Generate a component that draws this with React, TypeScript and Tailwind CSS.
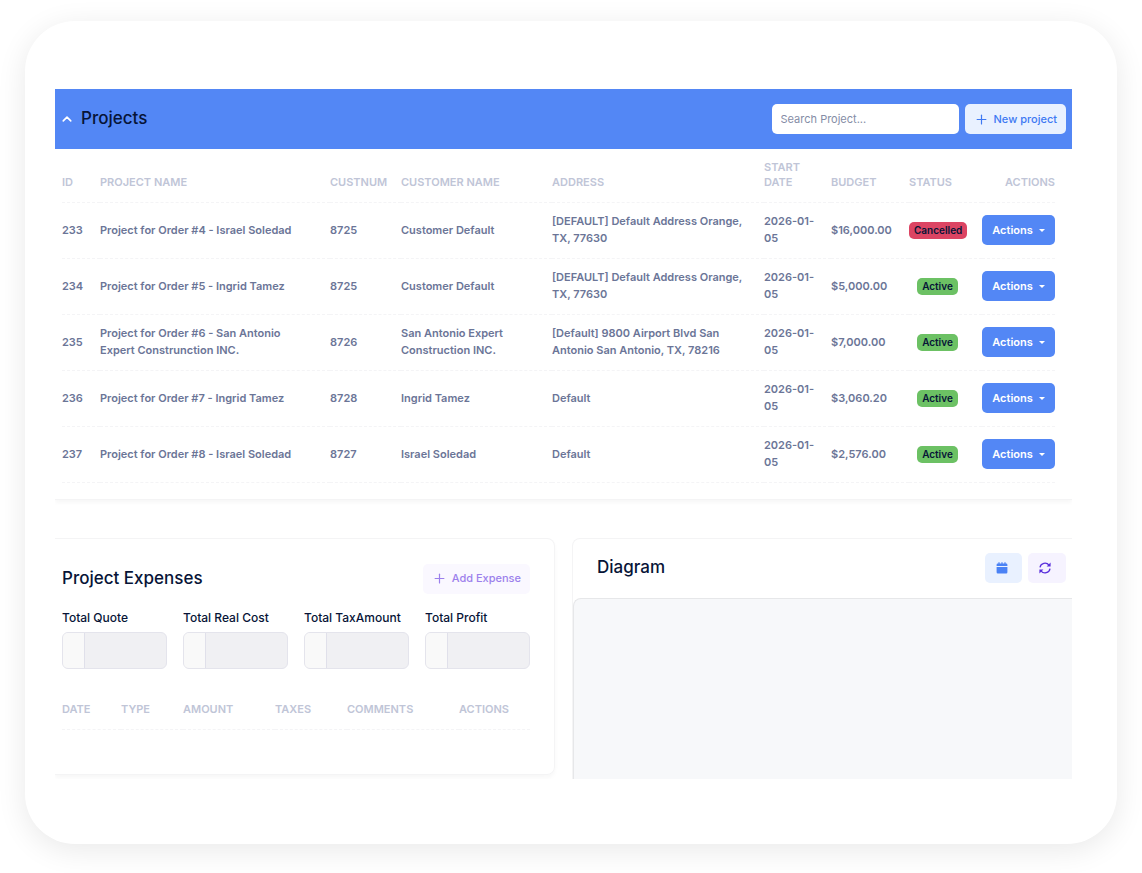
import { ChevronUp, Plus } from "lucide-react";

const projects = [
  {
    id: 233,
    name: "Project for Order #4 - Israel Soledad",
    custNum: 8725,
    customer: "Customer Default",
    address: "[DEFAULT] Default Address Orange, TX, 77630",
    startDate: "2026-01-05",
    budget: "$16,000.00",
    status: "Cancelled",
  },
  {
    id: 234,
    name: "Project for Order #5 - Ingrid Tamez",
    custNum: 8725,
    customer: "Customer Default",
    address: "[DEFAULT] Default Address Orange, TX, 77630",
    startDate: "2026-01-05",
    budget: "$5,000.00",
    status: "Active",
  },
  {
    id: 235,
    name: "Project for Order #6 - San Antonio Expert Construnction INC.",
    custNum: 8726,
    customer: "San Antonio Expert Construction INC.",
    address: "[Default] 9800 Airport Blvd San Antonio San Antonio, TX, 78216",
    startDate: "2026-01-05",
    budget: "$7,000.00",
    status: "Active",
  },
  {
    id: 236,
    name: "Project for Order #7 - Ingrid Tamez",
    custNum: 8728,
    customer: "Ingrid Tamez",
    address: "Default",
    startDate: "2026-01-05",
    budget: "$3,060.20",
    status: "Active",
  },
  {
    id: 237,
    name: "Project for Order #8 - Israel Soledad",
    custNum: 8727,
    customer: "Israel Soledad",
    address: "Default",
    startDate: "2026-01-05",
    budget: "$2,576.00",
    status: "Active",
  },
];

const projectColumns = [
  { label: "ID", className: "w-[38px]" },
  { label: "Project Name", className: "w-[230px]" },
  { label: "CustNum", className: "w-[71px]" },
  { label: "Customer Name", className: "w-[151px]" },
  { label: "Address", className: "w-[212px]" },
  { label: "Start Date", className: "w-[67px] pr-4" },
  { label: "Budget", className: "w-[78px]" },
  { label: "Status", className: "w-[73px]" },
  { label: "Actions", className: "w-[73px] text-right" },
];

const totals = [
  { id: "total-quote", label: "Total Quote" },
  { id: "total-real-cost", label: "Total Real Cost" },
  { id: "total-tax", label: "Total TaxAmount" },
  { id: "total-profit", label: "Total Profit" },
];

const expenseColumns = [
  { label: "Date", className: "w-[59px]" },
  { label: "Type", className: "w-[62px]" },
  { label: "Amount", className: "w-[92px]" },
  { label: "Taxes", className: "w-[72px]" },
  { label: "Comments", className: "w-[112px]" },
  { label: "Actions", className: "w-[71px]" },
];

function CalendarIcon() {
  return (
    <svg viewBox="0 0 12 12" className="h-3 w-3" fill="currentColor" aria-hidden="true">
      <path d="M2.4 0.3h1.2v1.2h1.8v-1.2h1.2v1.2h1.8v-1.2h1.2v1.2h0.6a1.2 1.2 0 0 1 1.2 1.2v1.3H0.6V2.7a1.2 1.2 0 0 1 1.2-1.2h0.6z" />
      <path d="M0.6 5h10.8v5.2a1.2 1.2 0 0 1-1.2 1.2H1.8a1.2 1.2 0 0 1-1.2-1.2z" />
    </svg>
  );
}

function SyncIcon() {
  return (
    <svg viewBox="0 0 12 12" className="h-3 w-3" fill="none" stroke="currentColor" strokeWidth="1.3" aria-hidden="true">
      <path d="M1 5.4A5 5 0 0 1 10 3.2M11 6.6A5 5 0 0 1 2 8.8" />
      <path d="M11.6 0.4v4H7.6zM0.4 11.6v-4h4z" fill="currentColor" stroke="none" />
    </svg>
  );
}

function ProjectsCard() {
  return (
    <section className="border-b border-[#f4f4f5] pb-4 shadow-[0_3px_4px_rgba(0,0,0,0.03)]">
      <header className="flex h-[60px] items-center justify-between bg-[#5387f5] px-[6px]">
        <div className="flex items-center gap-2">
          <button type="button" aria-label="Collapse projects" className="text-white">
            <ChevronUp className="h-3 w-3 scale-125" strokeWidth={2.6} />
          </button>
          <h2 className="text-[17px] font-medium text-[#071437]">Projects</h2>
        </div>
        <div className="flex items-center gap-[6px]">
          <input
            type="search"
            aria-label="Search Project"
            placeholder="Search Project..."
            className="h-[30px] w-[187px] rounded-[5px] bg-white px-[9px] text-[11px] text-[#4b5675] outline-none placeholder:text-[#858da6]"
          />
          <button
            type="button"
            className="flex h-[30px] items-center gap-[5px] rounded-[5px] bg-[#e9f1ff] px-[9px] text-[11px] font-medium text-[#3e79f3]"
          >
            <Plus className="h-[15px] w-[15px]" strokeWidth={1.9} />
            New project
          </button>
        </div>
      </header>

      <div className="pr-[17px] pl-[7px]">
        <table className="w-full table-fixed border-collapse text-left text-[11px]">
          <thead>
            <tr className="h-[53px] border-b border-dashed border-[#f4f4f6] uppercase text-[#c0c5d7]">
              {projectColumns.map((col) => (
                <th key={col.label} scope="col" className={`${col.className} pb-3 align-bottom leading-[15px] font-semibold`}>
                  {col.label}
                </th>
              ))}
            </tr>
          </thead>
          <tbody>
            {projects.map((project) => (
              <tr
                key={project.id}
                className="h-[56px] border-b border-dashed border-[#f4f4f6] leading-[17px] font-semibold text-[#6b7597]"
              >
                <td>{project.id}</td>
                <td className="pr-4">{project.name}</td>
                <td>{project.custNum}</td>
                <td className="pr-4">{project.customer}</td>
                <td className="pr-4">{project.address}</td>
                <td className="pr-4">{project.startDate}</td>
                <td>{project.budget}</td>
                <td className="pr-4 text-center">
                  <span
                    className={`inline-block rounded-[5px] px-[5px] text-[10px] leading-[17px] text-[#071437] ${
                      project.status === "Active" ? "bg-[#6cc164]" : "bg-[#dc4463]"
                    }`}
                  >
                    {project.status}
                  </span>
                </td>
                <td>
                  <button
                    type="button"
                    className="flex h-[30px] w-full items-center justify-center gap-[6px] rounded-[5px] bg-[#5387f5] text-[11px] font-semibold text-white"
                  >
                    Actions
                    <span className="border-x-3 border-t-3 border-x-transparent border-t-white" />
                  </button>
                </td>
              </tr>
            ))}
          </tbody>
        </table>
      </div>
    </section>
  );
}

function ExpensesCard() {
  return (
    <section className="self-start rounded-r-lg border-y border-r border-[#f4f4f5] pt-[25px] pr-6 pb-11 pl-[7px] shadow-[0_3px_4px_rgba(0,0,0,0.03)]">
      <header className="flex items-center justify-between">
        <h2 className="text-[17px] font-medium text-[#071437]">Project Expenses</h2>
        <button
          type="button"
          className="flex h-[30px] items-center gap-[5px] rounded-[5px] bg-[#faf8ff] px-[9px] text-[11px] font-medium text-[#9c80ec]"
        >
          <Plus className="h-[15px] w-[15px]" strokeWidth={1.9} />
          Add Expense
        </button>
      </header>

      <div className="mt-[15px] grid grid-cols-4 gap-4">
        {totals.map((total) => (
          <div key={total.id}>
            <label htmlFor={total.id} className="block text-xs leading-[18px] font-medium text-[#071437]">
              {total.label}
            </label>
            <div className="mt-[5px] flex h-[37px] overflow-hidden rounded-md border border-[#e4e4ec] bg-[#f0f0f3]">
              <span className="w-[22px] shrink-0 border-r border-[#e0e0ea] bg-[#f9f9f9]" />
              <input id={total.id} type="text" disabled className="w-full min-w-0 px-2 text-xs" />
            </div>
          </div>
        ))}
      </div>

      <table className="mt-5 w-full table-fixed border-collapse text-left text-[11px]">
        <thead>
          <tr className="h-[41px] border-b border-dashed border-[#f4f4f6] uppercase text-[#c0c5d7]">
            {expenseColumns.map((col) => (
              <th key={col.label} scope="col" className={`${col.className} font-semibold`}>
                {col.label}
              </th>
            ))}
          </tr>
        </thead>
      </table>
    </section>
  );
}

function DiagramCard() {
  return (
    <section className="rounded-tl-lg border-t border-l border-[#f4f4f5]">
      <header className="flex h-[59px] items-center justify-between pr-[6px] pl-6">
        <h2 className="text-[17px] font-medium text-[#071437]">Diagram</h2>
        <div className="flex gap-[6px]">
          <button
            type="button"
            aria-label="Schedule"
            className="flex h-[30px] w-[37px] items-center justify-center rounded-[5px] bg-[#e9f1ff] pr-1 text-[#4a82f5]"
          >
            <CalendarIcon />
          </button>
          <button
            type="button"
            aria-label="Refresh diagram"
            className="flex h-[30px] w-[38px] items-center justify-center rounded-[5px] bg-[#f6f3ff] pr-1 text-[#5a2fdc]"
          >
            <SyncIcon />
          </button>
        </div>
      </header>
      <div className="h-[181px] rounded-tl-lg border-t border-l border-[#e6e7e9] bg-[#f7f8fa]" />
    </section>
  );
}

export default function App() {
  return (
    <main className="bg-white px-[25px] pt-[21px] pb-[29px] font-['Inter',sans-serif]">
      <div className="rounded-[50px] bg-white pt-[68px] pr-[45px] pb-[65px] pl-[30px] shadow-[0_6px_30px_rgba(0,0,0,0.09)]">
        <div className="overflow-hidden">
          <ProjectsCard />
          <div className="mt-[38px] grid grid-cols-2 gap-[17px]">
            <ExpensesCard />
            <DiagramCard />
          </div>
        </div>
      </div>
    </main>
  );
}
